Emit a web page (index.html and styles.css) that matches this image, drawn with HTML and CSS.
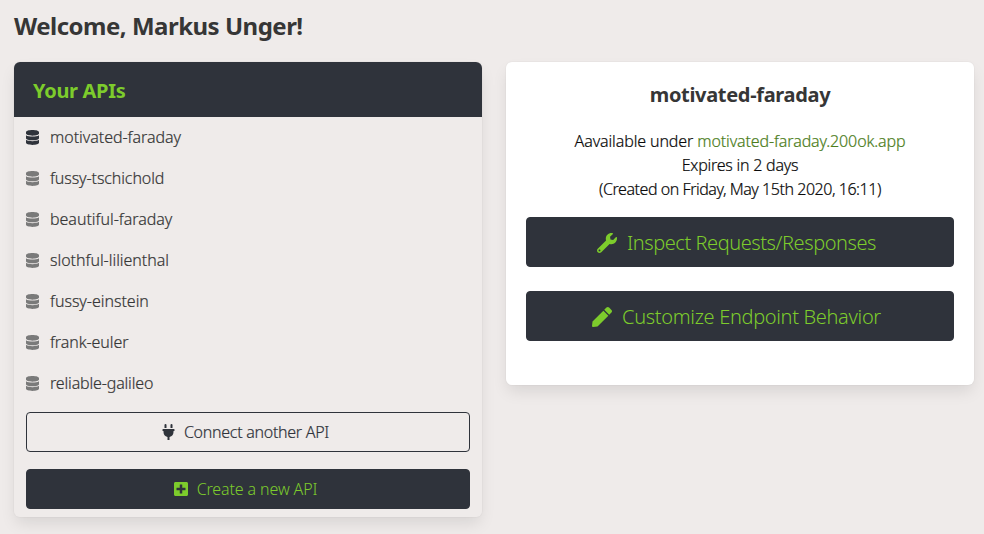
FILE: index.html
```
<!DOCTYPE html>
<html lang="en">
<head>
<meta charset="utf-8">
<title>Your APIs</title>
<link rel="stylesheet" href="styles.css">
</head>
<body>
<svg class="sprites" aria-hidden="true">
<symbol id="database" viewBox="0 0 448 512"><path d="M448 73.143v45.714C448 159.143 347.667 192 224 192S0 159.143 0 118.857V73.143C0 32.857 100.333 0 224 0s224 32.857 224 73.143zM448 176v102.857C448 319.143 347.667 352 224 352S0 319.143 0 278.857V176c48.125 33.143 136.208 48.572 224 48.572S399.874 209.143 448 176zm0 160v102.857C448 479.143 347.667 512 224 512S0 479.143 0 438.857V336c48.125 33.143 136.208 48.572 224 48.572S399.874 369.143 448 336z"/></symbol>
</svg>
<h1 class="welcome"><span class="t-welcome">Welcome, Markus Unger!</span></h1>
<main class="columns">
<nav class="panel">
<h2 class="panel-heading"><span class="t-heading">Your APIs</span></h2>
<a class="item active"><svg class="icon db"><use href="#database"/></svg><span class="t1">motivated-faraday</span></a>
<a class="item"><svg class="icon db"><use href="#database"/></svg><span class="t2">fussy-tschichold</span></a>
<a class="item"><svg class="icon db"><use href="#database"/></svg><span class="t3">beautiful-faraday</span></a>
<a class="item"><svg class="icon db"><use href="#database"/></svg><span class="t4">slothful-lilienthal</span></a>
<a class="item"><svg class="icon db"><use href="#database"/></svg><span class="t5">fussy-einstein</span></a>
<a class="item"><svg class="icon db"><use href="#database"/></svg><span class="t6">frank-euler</span></a>
<a class="item"><svg class="icon db"><use href="#database"/></svg><span class="t7">reliable-galileo</span></a>
<div class="actions">
<a class="button outlined"><svg class="icon plug" viewBox="0 0 384 512"><path d="M320,32a32,32,0,0,0-64,0v96h64Zm48,128H16A16,16,0,0,0,0,176v32a16,16,0,0,0,16,16H32v32A160.07,160.07,0,0,0,160,412.8V512h64V412.8A160.07,160.07,0,0,0,352,256V224h16a16,16,0,0,0,16-16V176A16,16,0,0,0,368,160ZM128,32a32,32,0,0,0-64,0v96h64Z"/></svg><span class="t-connect">Connect another API</span></a>
<a class="button dark"><svg class="icon plus" viewBox="0 0 448 512"><path d="M400 32H48C21.5 32 0 53.5 0 80v352c0 26.5 21.5 48 48 48h352c26.5 0 48-21.5 48-48V80c0-26.5-21.5-48-48-48zm-32 252c0 6.6-5.4 12-12 12h-92v92c0 6.6-5.4 12-12 12h-56c-6.6 0-12-5.4-12-12v-92H92c-6.6 0-12-5.4-12-12v-56c0-6.6 5.4-12 12-12h92v-92c0-6.6 5.4-12 12-12h56c6.6 0 12 5.4 12 12v92h92c6.6 0 12 5.4 12 12v56z"/></svg><span class="t-create">Create a new API</span></a>
</div>
</nav>
<section class="box">
<h2 class="title"><span class="t-title">motivated-faraday</span></h2>
<div class="details">
<div><span class="t-avail">Aavailable under <a class="link">motivated-faraday.200ok.app</a></span></div>
<div><span class="t-expires">Expires in 2 days</span></div>
<div><span class="t-created">(Created on Friday, May 15th 2020, 16:11)</span></div>
</div>
<a class="button dark large"><svg class="icon big" viewBox="0 0 512 512"><path d="M507.73 109.1c-2.24-9.03-13.54-12.09-20.12-5.51l-74.36 74.36-67.88-11.31-11.31-67.88 74.36-74.36c6.62-6.62 3.43-17.9-5.66-20.16-47.38-11.74-99.55.91-136.58 37.93-39.64 39.64-50.55 97.1-34.05 147.2L18.74 402.76c-24.99 24.99-24.99 65.51 0 90.5 24.99 24.99 65.51 24.99 90.5 0l213.21-213.21c50.12 16.71 107.47 5.68 147.37-34.22 37.07-37.07 49.7-89.32 37.91-136.73zM64 472c-13.25 0-24-10.75-24-24 0-13.26 10.75-24 24-24s24 10.74 24 24c0 13.25-10.75 24-24 24z"/></svg><span class="t-inspect">Inspect Requests/Responses</span></a>
<a class="button dark large"><svg class="icon big" viewBox="0 0 512 512"><path d="M290.74 93.24l128.02 128.02-277.99 277.99-114.14 12.6C11.35 513.54-1.56 500.62.14 485.34l12.7-114.22 277.9-277.88zm207.2-19.06l-60.11-60.11c-18.75-18.75-49.16-18.75-67.91 0l-56.55 56.55 128.02 128.02 56.55-56.55c18.75-18.76 18.75-49.16 0-67.91z"/></svg><span class="t-custom">Customize Endpoint Behavior</span></a>
</section>
</main>
</body>
</html>
```
FILE: styles.css
```
* { box-sizing: border-box; }
body { margin: 0; padding: 11px 10px 0 14px; height: 534px; overflow: hidden; background: #efebea; color: #363636; font: 300 16px/24px "Noto Sans", "Open Sans", sans-serif; white-space: nowrap; }
.sprites { position: absolute; width: 0; height: 0; }
.welcome { margin: 0 0 22px; font-size: 24px; line-height: 29px; font-weight: 700; }
.columns { display: grid; grid-template-columns: 468px 468px; gap: 24px; align-items: start; }
.panel, .box { border-radius: 6px; box-shadow: 0 8px 16px -2px rgba(10,10,10,.1), 0 0 0 1px rgba(10,10,10,.02); }
.panel { height: 455px; }
.panel-heading { margin: 0; height: 55px; padding: 15px 19px; border-radius: 6px 6px 0 0; background: #2f333b; color: #7dcc2c; font-size: 20px; line-height: 28px; font-weight: 700; }
.item { display: flex; align-items: center; height: 41px; padding: 0 12px 1px; }
.item span, .outlined span, .details { -webkit-text-stroke: .2px currentColor; }
.icon { display: block; flex: none; fill: currentColor; }
.db { width: 13px; height: 15px; margin: 1px 11px 0 0; color: #7a7a7a; }
.active .db { color: #2f333b; }
.actions { display: grid; gap: 17px; padding: 8px 12px; }
.button { display: flex; align-items: center; justify-content: center; height: 40px; padding-right: 5px; border: 1px solid #2f333b; border-radius: 4px; }
.outlined { color: #2f333b; }
.dark { background: #2f333b; color: #7dcc2c; }
.plug { width: 13px; height: 16px; margin-right: 9px; }
.plus { width: 14px; height: 16px; margin-right: 9px; }
.box { height: 323px; padding: 20px; background: #fff; text-align: center; }
.title { margin: 0 0 22px; font-size: 20px; line-height: 25px; font-weight: 700; }
.details { margin-bottom: 16px; color: #0a0a0a; }
.link { color: #4c7d1b; }
.large { height: 50px; margin-bottom: 24px; padding-top: 1px; padding-right: 7px; font-size: 20px; font-weight: 300; }
.big { width: 20px; height: 20px; margin-right: 10px; }
.t-welcome { letter-spacing: -.5px; }
.t-heading, .t-title { letter-spacing: -.32px; }
.t1 { letter-spacing: -.04px; }
.t2 { letter-spacing: -.1px; }
.t4, .t3, .t5 { letter-spacing: -.03px; }
.t6 { letter-spacing: -.08px; }
.t7 { letter-spacing: -.16px; }
.t-connect { letter-spacing: -.28px; }
.t-create { letter-spacing: -.12px; }
.t-avail { letter-spacing: -.12px; }
.t-expires { letter-spacing: -.24px; }
.t-created { letter-spacing: -.46px; }
.t-inspect { letter-spacing: -.44px; }
.t-custom { letter-spacing: -.33px; }
```
